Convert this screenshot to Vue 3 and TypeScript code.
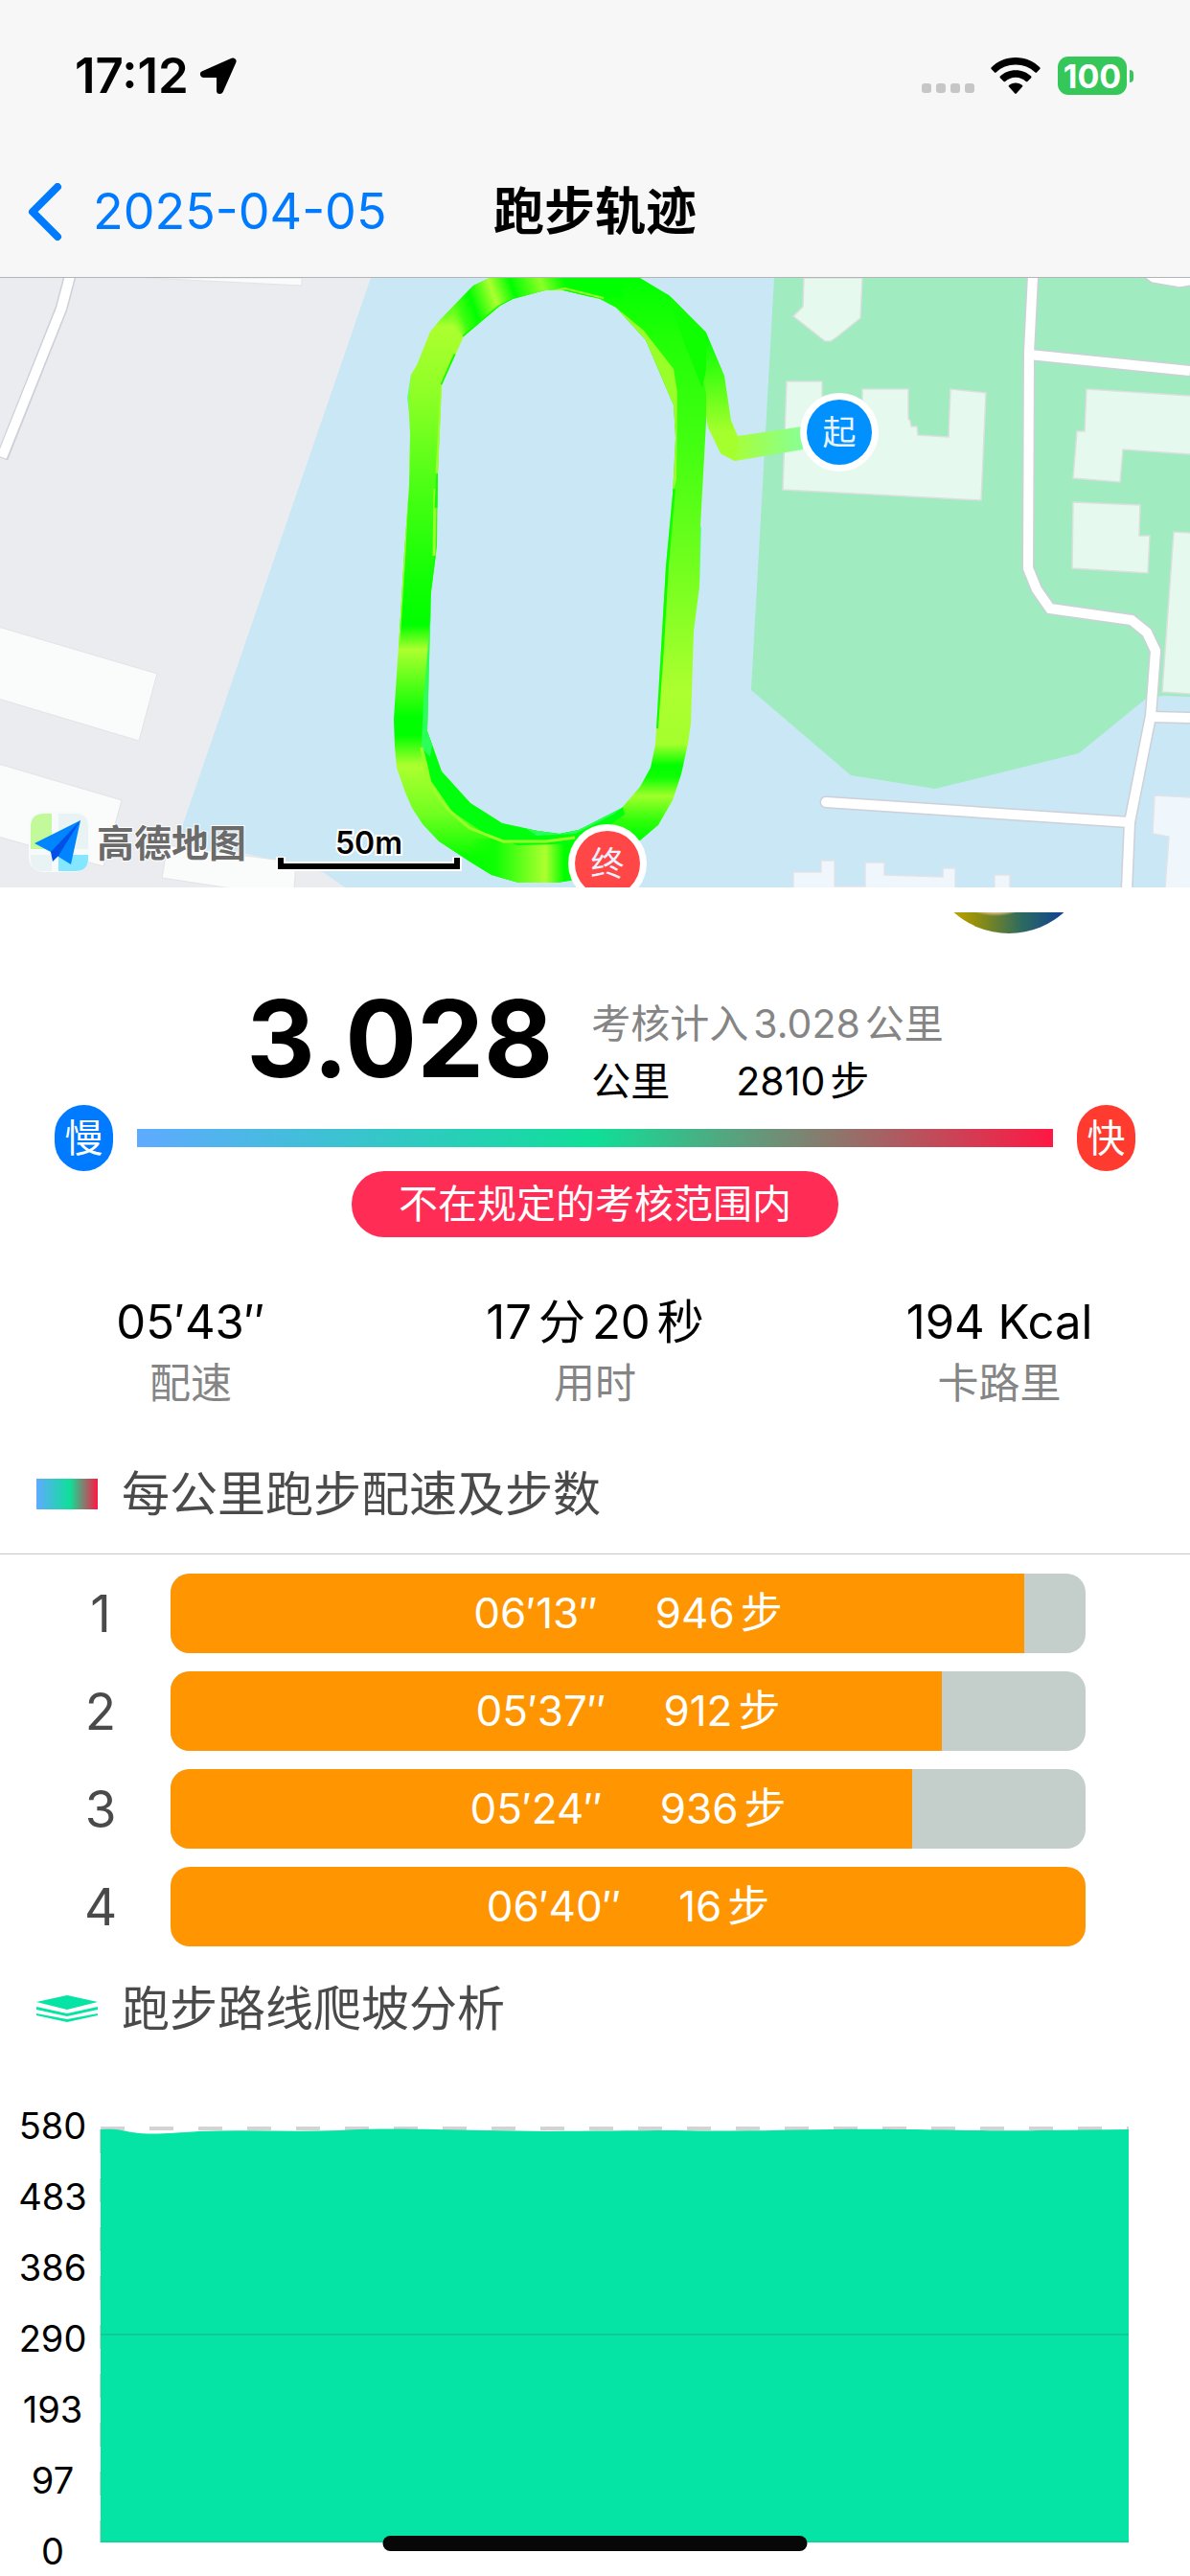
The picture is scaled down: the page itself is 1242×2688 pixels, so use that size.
<script setup lang="ts">
interface Split {
  km: number
  pace: string
  steps: number
  seconds: number
}

interface Stat {
  parts: string[]
  label: string
}

const slowest = 400

const splits: Split[] = [
  { km: 1, pace: '06′13″', steps: 946, seconds: 373 },
  { km: 2, pace: '05′37″', steps: 912, seconds: 337 },
  { km: 3, pace: '05′24″', steps: 936, seconds: 324 },
  { km: 4, pace: '06′40″', steps: 16, seconds: 400 },
]

const stats: Stat[] = [
  { parts: ['05′43″'], label: '配速' },
  { parts: ['17', '分', '20', '秒'], label: '用时' },
  { parts: ['194 Kcal'], label: '卡路里' },
]

const altitudes: number[] = [580, 483, 386, 290, 193, 97, 0]

const fillWidth = (s: Split): string => `${(s.seconds / slowest) * 100}%`
</script>

<template>
  <div class="page">
    <header class="top">
      <div class="status">
        <div class="status-left">
          <span class="clock">17:12</span>
          <svg class="arrow" viewBox="0 0 38 38" aria-hidden="true">
            <path d="M34 4 L3.500 17.500 H20.500 V34.500 Z" />
          </svg>
        </div>
        <div class="status-right">
          <span class="dots"><i></i><i></i><i></i><i></i></span>
          <svg class="wifi" viewBox="0 0 52 38" aria-hidden="true">
            <path d="M26 0 C36 0 45 4 51.500 10.500 Q52 11.300 51.400 12 L48 15.600 Q47.200 16.300 46.400 15.600 C41 10.500 34 7.600 26 7.600 C18 7.600 11 10.500 5.600 15.600 Q4.800 16.300 4 15.600 L.600 12 Q0 11.300 .500 10.500 C7 4 16 0 26 0 Z" />
            <path d="M26 13.200 C32.500 13.200 38 15.600 42.200 19.600 Q42.800 20.400 42.200 21.200 L38.400 25 Q37.600 25.600 36.800 25 C34 22.300 30.300 20.700 26 20.700 C21.700 20.700 18 22.300 15.200 25 Q14.400 25.600 13.600 25 L9.800 21.200 Q9.200 20.400 9.800 19.600 C14 15.600 19.500 13.200 26 13.200 Z" />
            <path d="M26 26.400 C28.800 26.400 31.200 27.400 33 29 Q33.700 29.800 33 30.600 L26.800 37.400 Q26 38.200 25.200 37.400 L19 30.600 Q18.300 29.800 19 29 C20.800 27.400 23.200 26.400 26 26.400 Z" />
          </svg>
          <span class="battery">100</span>
        </div>
      </div>
      <nav class="nav">
        <button class="back" type="button">
          <svg viewBox="0 0 36 60" aria-hidden="true"><path d="M31 4 L5 30 L31 56" /></svg>
          <span>2025-04-05</span>
        </button>
        <h1>跑步轨迹</h1>
      </nav>
    </header>

    <svg class="map" viewBox="0 0 1242 636" role="img" aria-label="跑步轨迹">
      <defs>
        <linearGradient id="left" gradientUnits="userSpaceOnUse" x1="0" y1="0" x2="0" y2="636">
          <stop offset=".03" stop-color="#00ff00" />
          <stop offset=".08" stop-color="#adff2f" />
          <stop offset=".19" stop-color="#8eff26" />
          <stop offset=".34" stop-color="#4cff14" />
          <stop offset=".5" stop-color="#10ff04" />
          <stop offset=".57" stop-color="#00ff00" />
          <stop offset=".61" stop-color="#adff2f" />
          <stop offset=".72" stop-color="#00ff00" />
          <stop offset=".75" stop-color="#00ff00" />
          <stop offset=".8" stop-color="#adff2f" />
          <stop offset=".88" stop-color="#70ff20" />
          <stop offset=".95" stop-color="#08ff00" />
        </linearGradient>
        <linearGradient id="right" gradientUnits="userSpaceOnUse" x1="0" y1="0" x2="0" y2="636">
          <stop offset="0" stop-color="#00ff00" />
          <stop offset=".1" stop-color="#20ff06" />
          <stop offset=".3" stop-color="#48ff12" />
          <stop offset=".5" stop-color="#78ff20" />
          <stop offset=".68" stop-color="#adff2f" />
          <stop offset=".765" stop-color="#a4ff2c" />
          <stop offset=".8" stop-color="#00ff00" />
          <stop offset=".82" stop-color="#10ff04" />
          <stop offset=".85" stop-color="#a0ff2a" />
          <stop offset=".89" stop-color="#30ff0a" />
          <stop offset=".92" stop-color="#00ff00" />
        </linearGradient>
        <linearGradient id="crest" gradientUnits="userSpaceOnUse" x1="470" y1="50" x2="610" y2="0">
          <stop offset="0" stop-color="#adff2f" stop-opacity="0" />
          <stop offset=".1" stop-color="#40ff10" />
          <stop offset=".2" stop-color="#00ff00" />
          <stop offset=".36" stop-color="#adff2f" />
          <stop offset=".5" stop-color="#00ff00" />
          <stop offset=".7" stop-color="#8cff26" />
          <stop offset=".86" stop-color="#00ff00" />
        </linearGradient>
        <linearGradient id="foot" gradientUnits="userSpaceOnUse" x1="490" y1="0" x2="600" y2="0">
          <stop offset="0" stop-color="#00ff00" stop-opacity="0" />
          <stop offset=".25" stop-color="#10ff04" />
          <stop offset=".72" stop-color="#adff2f" />
          <stop offset=".9" stop-color="#00ff00" />
        </linearGradient>
        <linearGradient id="spurDown" gradientUnits="userSpaceOnUse" x1="0" y1="60" x2="0" y2="160">
          <stop offset="0" stop-color="#00ff00" />
          <stop offset="1" stop-color="#a4ff2c" />
        </linearGradient>
        <linearGradient id="spurAcross" gradientUnits="userSpaceOnUse" x1="760" y1="0" x2="840" y2="0">
          <stop offset="0" stop-color="#a8ff30" />
          <stop offset="1" stop-color="#88ff98" />
        </linearGradient>
        <clipPath id="track">
          <path clip-rule="evenodd" d="M511 0 L494 8 459 44 449 56 435 91 429 101 426 125 428 162 427 217 422 285 417 369 412 444 411 461 412 489 414 511 423 537 430 553 441 570 458 588 490 609 513 623 541 631 582 631 600 628 640 604 668 587 687 571 702 545 711 518 718 486 721 465 724 369 730 322 731 259 737 150 737 57 698 18 668 0 Z M643 31 L626 22 588 13 569 13 535 22 522 29 484 61 475 81 461 112 457 204 456 280 450 327 446 473 461 515 491 548 524 569 561 577 584 580 604 576 649 553 668 531 679 511 684 487 690 386 695 301 702 226 705 167 703 133 674 65 Z" />
        </clipPath>
      </defs>

      <rect width="1242" height="636" fill="#ebecef" />
      <path fill="#c9e7f5" d="M387 0 L192 567 185 594 250 599 337 620 360 636 1242 636 1242 0 Z" />
      <path fill="#a0ebc0" d="M808 0 L784 430 888 519 976 533 1126 496 1196 439 1214 436 1242 437 1242 0 Z" />

      <g fill="#fafbfb" stroke="#e2e3e5">
        <path d="M-2 364 L164 413 145 483 -2 439 Z" />
        <path d="M-2 507 L127 545 108 614 -2 583 Z" />
        <path d="M175 592 L309 610 307 637 241 637 169 626 Z" />
        <path d="M153 0 L315 8 315 0 Z" />
      </g>
      <g fill="#e6f9ee" stroke="#dcdfde" stroke-width="1.500">
        <path d="M839 0 L838 30 828 40 861 66 867 66 873 62 898 42 900 0 Z" />
        <path d="M821 108 L858 108 858 137 900 137 900 116 948 116 948 147 950 149 951 155 957 155 958 164 990 166 992 116 1029 120 1024 232 817 221 Z" />
        <path d="M1134 116 L1243 123 1243 184 1172 179 1169 213 1120 209 1124 160 1132 160 Z" />
        <path d="M1120 234 L1190 237 1189 269 1200 269 1198 308 1119 303 Z" />
        <path d="M1225 265 L1243 266 1243 434 1213 432 Z" />
      </g>
      <path fill="#fff" stroke="#ccd0d6" stroke-width="1.500" d="M1194 -1 L1202 5 1231 10 1243 8 1243 -1 Z" />
      <g fill="#f0f7fc" stroke="#e2e3e8" stroke-width="1.500">
        <path d="M828 637 L828 620 857 620 857 608 871 608 871 635 903 635 903 610 923 610 923 623 984 625 984 616 997 616 997 637 Z" />
        <path d="M1038 637 V623 H1054 V637 Z" />
        <path d="M1205 540 L1243 542 1243 637 1216 637 1220 583 1203 580 Z" />
      </g>

      <g fill="none" stroke="#cdd0d8" stroke-width="13">
        <path d="M73 -2 L64 32 2 188" />
        <path d="M862 547 L1179 568" stroke-linecap="round" />
        <path d="M1074 80 L1242 97 M1201 458 L1242 459" />
        <path d="M1078 -2 L1074 78 1073 303 1082 325 1096 345 1181 357 1197 370 1206 389 1201 457 1179 568 1176 638" />
      </g>
      <g fill="none" stroke="#fff" stroke-width="10">
        <path d="M73 -2 L64 32 2 187" />
        <path d="M862 547 L1179 568" stroke-linecap="round" />
        <path d="M1074 80 L1242 97 M1201 458 L1242 459" />
        <path d="M1078 -2 L1074 78 1073 303 1082 325 1096 345 1181 357 1197 370 1206 389 1201 457 1179 568 1176 638" />
      </g>

      <path fill="#50ffb0" d="M429 101 L425 125 427 140 434 120 Z M729 265 L732 259 730 322 725 345 Z" />
      <path fill="url(#spurAcross)" d="M763 149 L770 165 838 155 838 179 767 191 752 183 Z" />
      <path fill="url(#spurDown)" d="M700 20 L737 57 756 102 763 149 770 168 767 191 752 183 739 156 730 100 Z" />
      <g clip-path="url(#track)">
        <rect x="400" width="190" height="636" fill="url(#left)" />
        <path fill="url(#right)" d="M590 0 H698 L722 50 732 100 738 125 V636 H590 Z" />
        <path fill="#10ff00" d="M690 0 L738 50 V90 L733 115 715 70 Z" />
        <path fill="url(#crest)" d="M490 -2 L462 42 486 62 530 40 610 20 H650 V-2 Z" />
        <rect x="490" y="585" width="112" height="50" fill="url(#foot)" />
        <path fill="#00ff0c" d="M446 473 L462 512 492 546 524 567 561 576 608 574 650 552 652 560 610 590 540 592 505 579 472 557 450 525 442 490 Z" />
        <path fill="#2dff5a" d="M447 380 L451 327 452 480 449 500 440 490 442 440 Z M550 575 L600 576 649 553 640 560 600 580 560 582 Z" />
        <path fill="none" stroke="#98ff28" stroke-width="3" d="M440 490 L446 525 468 555 490 574 525 588 570 588 600 584" />
        <path fill="#98ff28" d="M643 31 L672 55 703 95 707 120 706 210 702 226 705 167 703 133 674 65 Z" />
        <path fill="none" stroke="#10ff00" stroke-width="4" d="M703 220 L696 300 691 386 685 470" />
        <path fill="none" stroke="#9cff2a" stroke-width="3" d="M461 112 L456 204 M454 220 L453 290 M427 180 L422 285 416 380" />
        <path fill="none" stroke="#10ff00" stroke-width="5" d="M536 23 L521 31 484 62 M476 80 L462 112 M458 204 L456 240 M456 290 L450 330" />
        <path fill="none" stroke="#98ff28" stroke-width="2" d="M570 15 L590 11 630 21" />
      </g>

      <g class="pin">
        <circle cx="876" cy="161" r="41" fill="#fff" />
        <circle cx="876" cy="161" r="34" fill="#0091ff" />
        <text x="876" y="174">起</text>
        <circle cx="634" cy="611" r="41" fill="#fff" />
        <circle cx="634" cy="611" r="34" fill="#ff4747" />
        <text x="634" y="624">终</text>
      </g>

      <path fill="none" stroke="#fff" stroke-width="10" d="M293 604 V614 H477 V604" />
      <path fill="none" stroke="#000" stroke-width="6" d="M293 605 V614 H477 V605" />
      <text class="scale" x="385" y="601">50m</text>

      <g>
        <rect x="30" y="557" width="63" height="63" rx="15" fill="#f7fafa" />
        <path fill="#c2f99b" d="M54 559 V596 H32 V573 Q32 559 46 559 Z" />
        <path fill="#e9f3f3" d="M61 559 H78 Q92 559 92 573 V596 H61 Z M32 602 H54 V619 H46 Q32 619 32 606 Z" />
        <path fill="#85e6ff" d="M61 602 H92 V606 Q92 619 78 619 H61 Z" />
        <path fill="#0085ff" d="M84 566 L36 590 53 599 74 612 Z" />
        <path fill="#0050e8" d="M84 566 L53 599 55 609 61 603 Z" />
        <text class="brand" x="101" y="604">高德地图</text>
      </g>
    </svg>

    <main>
      <div class="avatar-strip"><span class="avatar"></span></div>

      <section class="hero">
        <strong class="distance">3.028</strong>
        <div class="counted">
          <p class="muted"><span>考核计入</span><span>3.028</span><span>公里</span></p>
          <p><span>公里</span><span class="steps">2810</span><span>步</span></p>
        </div>
      </section>

      <div class="speed">
        <span class="tag slow">慢</span>
        <span class="ramp"></span>
        <span class="tag fast">快</span>
      </div>
      <p class="verdict">不在规定的考核范围内</p>

      <dl class="stats">
        <div v-for="s in stats" :key="s.label">
          <dd><span v-for="p in s.parts" :key="p">{{ p }}</span></dd>
          <dt>{{ s.label }}</dt>
        </div>
      </dl>

      <section>
        <h2 class="ruled"><span class="swatch"></span>每公里跑步配速及步数</h2>
        <ol class="splits">
          <li v-for="s in splits" :key="s.km">
            <span class="km">{{ s.km }}</span>
            <div class="bar">
              <div class="fill" :style="{ width: fillWidth(s) }"></div>
              <div class="bar-text">
                <span>{{ s.pace }}</span>
                <span class="count"><span>{{ s.steps }}</span><span>步</span></span>
              </div>
            </div>
          </li>
        </ol>
      </section>

      <section>
        <h2>
          <svg class="layers" viewBox="0 0 64 28" aria-hidden="true">
            <path d="M32 0 L64 7 32 15 0 7 Z" />
            <path d="M0 12 L32 19 64 12 V15 L32 22 0 15 Z" />
            <path d="M0 19 L32 25 64 19 V21 L32 28 0 21 Z" />
          </svg>
          跑步路线爬坡分析
        </h2>
        <div class="chart">
          <div class="axis">
            <span v-for="a in altitudes" :key="a">{{ a }}</span>
          </div>
          <svg class="plot" viewBox="0 0 1074 434" preserveAspectRatio="none" aria-hidden="true">
            <path d="M1 2 H1074" stroke="#d3d3d3" stroke-width="4" stroke-dasharray="25 26" />
            <path d="M1 3 V434" stroke="#d3d3d3" stroke-width="2" stroke-dasharray="25 26" />
            <path fill="#05e4a5" d="M1 3 C18 2 22 4 34 6 C54 9 72 7 104 5 C150 3 200 6 250 4 C300 1 340 3 400 4 C470 6 530 4 600 4 C690 6 740 2 830 3 C880 3 920 5 980 4 L1074 3 V434 H1 Z" />
            <path d="M1 217 H1074" stroke="#23ae87" stroke-width="1" />
            <path d="M1 433 H1074" stroke="#16c795" stroke-width="1" />
          </svg>
        </div>
      </section>
    </main>
    <div class="home-bar"></div>
  </div>
</template>

<style>
body {
  margin: 0;
  background: #fff;
}
</style>

<style scoped>
.page {
  min-height: 100vh;
  overflow: hidden;
  background: #fff;
  color: #000;
  font-family: Inter, "Noto Sans CJK SC", sans-serif;
}

p, h1, h2, dl, dd, ol {
  margin: 0;
  padding: 0;
}

.top {
  background: #f7f7f7;
  border-bottom: 1px solid #b4b4b6;
}

.status {
  display: flex;
  align-items: center;
  justify-content: space-between;
  height: 158px;
  padding: 0 66px 0 78px;
}

.status-left,
.status-right {
  display: flex;
  align-items: center;
}

.status-left {
  gap: 12px;
}

.clock {
  font-size: 51px;
  font-weight: 600;
  line-height: 60px;
}

.arrow {
  width: 38px;
  height: 38px;
  stroke: #000;
  stroke-width: 7;
  stroke-linejoin: round;
}

.dots {
  display: flex;
  gap: 5px;
  margin-top: 26px;
}

.dots i {
  width: 10px;
  height: 10px;
  border-radius: 3px;
  background: #c6c6c6;
}

.wifi {
  width: 52px;
  height: 38px;
  margin: 0 18px 0 17px;
}

.battery {
  position: relative;
  width: 72px;
  height: 40px;
  border-radius: 11px;
  background: #35c759;
  color: #fff;
  font-size: 34px;
  font-weight: 700;
  line-height: 41px;
  text-align: center;
}

.battery::after {
  content: "";
  position: absolute;
  top: 14px;
  right: -7px;
  width: 4px;
  height: 13px;
  border-radius: 0 6px 6px 0;
  background: #35c759;
}

.nav {
  display: grid;
  grid-template-columns: 1fr auto 1fr;
  align-items: center;
  height: 125px;
  padding: 0 29px 6px;
}

.back {
  display: flex;
  align-items: center;
  justify-self: start;
  gap: 32px;
  padding: 0;
  border: 0;
  background: none;
  color: #007aff;
  font: inherit;
  font-size: 52px;
  line-height: 64px;
}

.back svg {
  width: 36px;
  height: 60px;
  fill: none;
  stroke: #007aff;
  stroke-width: 8;
  stroke-linecap: round;
  stroke-linejoin: round;
}

h1 {
  font-size: 53px;
  font-weight: 600;
  line-height: 64px;
}

.map {
  display: block;
  width: 100%;
  height: auto;
}

.pin text {
  fill: #e8f2ff;
  font-size: 35px;
  text-anchor: middle;
}

.scale {
  font-size: 32px;
  font-weight: 600;
  text-anchor: middle;
  stroke: #fff;
  stroke-width: 4px;
  paint-order: stroke;
}

.brand {
  font-size: 39px;
  font-weight: 700;
  fill: #6b6b6b;
  stroke: #fff;
  stroke-width: 2px;
  paint-order: stroke;
}

.avatar-strip {
  display: flex;
  align-items: flex-end;
  justify-content: flex-end;
  height: 22px;
  margin-top: 26px;
  padding-right: 103px;
  overflow: hidden;
}

.avatar {
  flex: none;
  width: 172px;
  height: 172px;
  border-radius: 50%;
  background:
    radial-gradient(circle at 72px 86px, #e8c48c 64px, transparent 68px),
    linear-gradient(90deg, #b8a000 18%, #938f0c 30%, #2c6a60 58%, #14468c 80%);
}

.hero {
  display: flex;
  align-items: flex-end;
  justify-content: center;
  gap: 40px;
  height: 125px;
  margin-top: 54px;
}

.distance {
  align-self: flex-start;
  font-size: 111px;
  font-weight: 700;
  line-height: 112px;
}

.counted {
  display: flex;
  flex-direction: column;
  gap: 10px;
  font-size: 41px;
  line-height: 50px;
}

.counted p {
  display: flex;
  gap: 5px;
}

.muted {
  color: #858585;
}

.steps {
  margin-left: 64px;
}

.speed {
  display: flex;
  align-items: center;
  gap: 25px;
  padding: 0 57px;
}

.tag {
  width: 61px;
  height: 69px;
  border-radius: 31px;
  color: #fff;
  font-size: 40px;
  line-height: 69px;
  text-align: center;
}

.slow {
  background: #007aff;
}

.fast {
  background: #ff3b30;
}

.ramp {
  flex: 1;
  height: 19px;
  background: linear-gradient(90deg, #5fabff, #0fdf98 50%, #ff1744);
}

.verdict {
  width: fit-content;
  margin: 0 auto;
  padding: 0 49px;
  border-radius: 34px;
  background: #ff2d55;
  color: #fff;
  font-size: 41px;
  line-height: 69px;
}

.stats {
  display: flex;
  justify-content: space-between;
  margin-top: 59px;
  padding: 0 18px;
}

.stats div {
  display: flex;
  flex: 0 0 30%;
  flex-direction: column;
  gap: 8px;
  text-align: center;
}

.stats dd {
  display: flex;
  justify-content: center;
  gap: 7px;
  font-size: 49px;
  line-height: 60px;
}

.stats dt {
  color: #858585;
  font-size: 43px;
  line-height: 50px;
}

h2 {
  display: flex;
  align-items: center;
  gap: 25px;
  padding: 0 38px;
  color: #4a4a4a;
  font-size: 50px;
  font-weight: 400;
  line-height: 74px;
  margin-top: 28px;
}

.ruled {
  margin-top: 54px;
  padding-bottom: 25px;
  border-bottom: 1px solid #c6c6c8;
}

.swatch {
  width: 64px;
  height: 32px;
  background: linear-gradient(90deg, #5fabff, #0fdf98 55%, #ff1744);
}

.splits {
  display: flex;
  flex-direction: column;
  gap: 19px;
  padding: 20px 109px 0 32px;
  list-style: none;
}

.splits li {
  display: flex;
  align-items: center;
}

.km {
  width: 146px;
  color: #4a4a4a;
  font-size: 53px;
  text-align: center;
}

.bar {
  display: grid;
  flex: 1;
  height: 83px;
  border-radius: 20px;
  overflow: hidden;
  background: #c4ceca;
}

.fill,
.bar-text {
  grid-area: 1 / 1;
}

.fill {
  background: #ff9500;
}

.bar-text {
  display: flex;
  justify-content: center;
  gap: 60px;
  color: #fff;
  font-size: 44px;
  line-height: 82px;
}

.count {
  display: flex;
  gap: 6px;
}

.layers {
  width: 64px;
  height: 28px;
  fill: #05e4a5;
}

.chart {
  display: flex;
  height: 488px;
  margin-top: 63px;
  padding-right: 64px;
}

.axis {
  display: flex;
  flex: none;
  flex-direction: column;
  justify-content: space-between;
  box-sizing: border-box;
  width: 104px;
  padding-left: 6px;
  font-size: 38px;
  line-height: 44px;
  text-align: center;
}

.plot {
  flex: 1;
  min-width: 0;
  height: 434px;
  margin-top: 23px;
}

.home-bar {
  position: fixed;
  bottom: 26px;
  left: 50%;
  width: 443px;
  height: 16px;
  border-radius: 8px;
  background: #070707;
  transform: translateX(-50%);
}
</style>
